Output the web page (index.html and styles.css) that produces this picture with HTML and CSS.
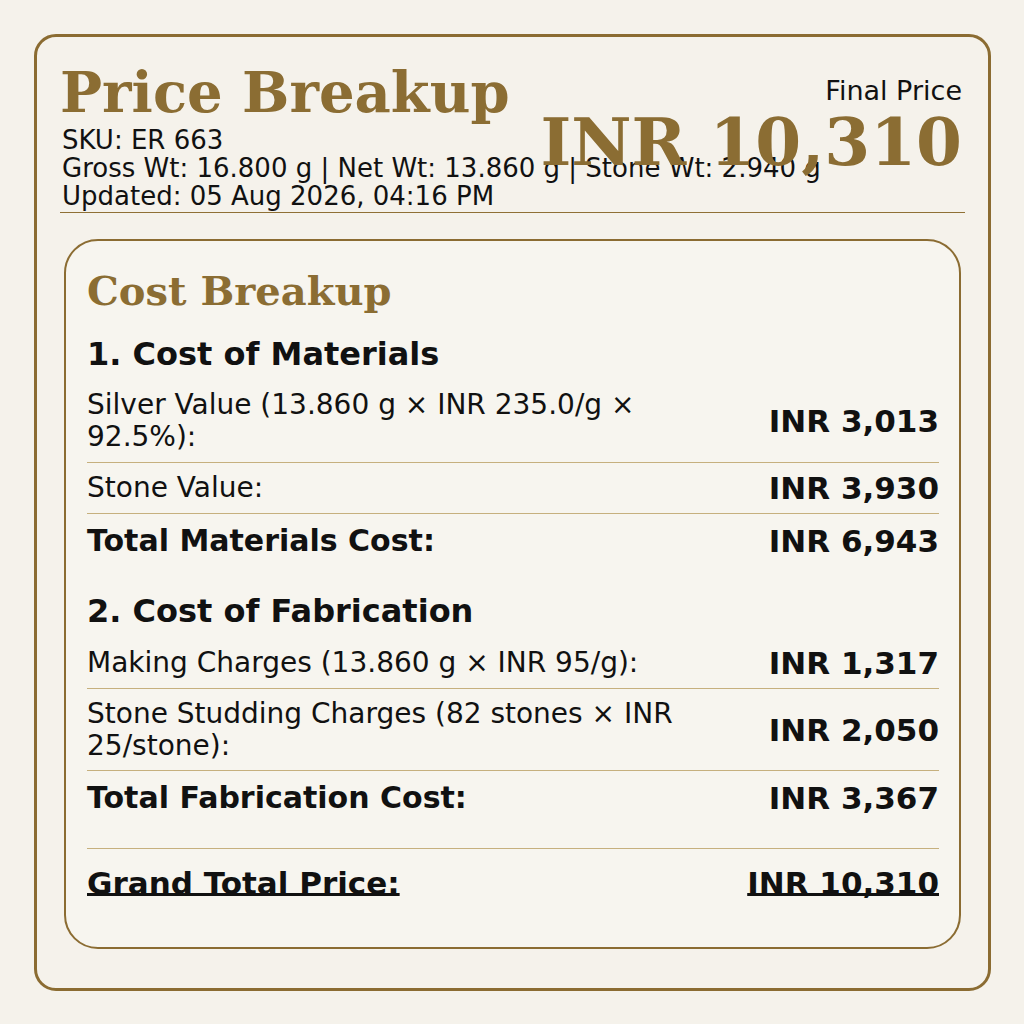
FILE: index.html
```html
<!DOCTYPE html>
<html>
<head>
<meta charset="utf-8">
<link rel="stylesheet" href="styles.css">
</head>
<body>
<div class="card">
  <header class="header">
    <div class="info">
      <h1 class="title">Price Breakup</h1>
      <div class="meta">SKU: ER 663</div>
      <div class="meta nowrap">Gross Wt: 16.800 g | Net Wt: 13.860 g | Stone Wt: 2.940 g</div>
      <div class="meta">Updated: 05 Aug 2026, 04:16 PM</div>
    </div>
    <div class="final">
      <div class="final-label">Final Price</div>
      <div class="final-value">INR 10,310</div>
    </div>
  </header>
  <section class="breakup">
    <h2 class="breakup-title">Cost Breakup</h2>
    <h3 class="section-title">1. Cost of Materials</h3>
    <div class="row"><div class="label">Silver Value (13.860 g × INR 235.0/g × 92.5%):</div><div class="value">INR 3,013</div></div>
    <div class="row"><div class="label">Stone Value:</div><div class="value">INR 3,930</div></div>
    <div class="row total"><div class="label">Total Materials Cost:</div><div class="value">INR 6,943</div></div>
    <h3 class="section-title second">2. Cost of Fabrication</h3>
    <div class="row"><div class="label">Making Charges (13.860 g × INR 95/g):</div><div class="value">INR 1,317</div></div>
    <div class="row"><div class="label">Stone Studding Charges (82 stones × INR 25/stone):</div><div class="value">INR 2,050</div></div>
    <div class="row total"><div class="label">Total Fabrication Cost:</div><div class="value">INR 3,367</div></div>
    <div class="grand">
      <div class="grand-label">Grand Total Price:</div>
      <div class="grand-value">INR 10,310</div>
    </div>
  </section>
</div>
</body>
</html>
```
FILE: styles.css
```css
* { box-sizing: border-box; }
html, body { margin: 0; padding: 0; }
body {
  background: #f5f2eb;
  padding: 34px 33px 34px 34px;
  font-family: "DejaVu Sans", sans-serif;
  color: #111111;
}
.card {
  height: 957px;
  border: 3px solid #8b6c32;
  border-radius: 22px;
  padding: 24px 23px 0 23px;
}
.header {
  position: relative;
  border-bottom: 1px solid #8f7035;
  padding-bottom: 1.8px;
}
.title {
  margin: 0 0 2px 0;
  font-family: "DejaVu Serif", serif;
  font-weight: bold;
  font-size: 56px;
  line-height: 63.2px;
  color: #8b6d33;
}
.meta {
  font-size: 26px;
  line-height: 28px;
  padding-left: 2px;
}
.nowrap { white-space: nowrap; }
.final {
  position: absolute;
  top: 15px;
  right: 3px;
  text-align: right;
}
.final-label {
  font-size: 27px;
  line-height: 29.7px;
}
.final-value {
  font-family: "DejaVu Serif", serif;
  font-weight: bold;
  font-size: 66px;
  line-height: 72.6px;
  color: #8b6d33;
  white-space: nowrap;
}
.breakup {
  margin: 26px 4px 0 4px;
  height: 710px;
  background: #f7f5ef;
  border: 2px solid #8b6c32;
  border-radius: 34px;
  padding: 26px 20px 0 21px;
}
.breakup-title {
  margin: 0;
  font-family: "DejaVu Serif", serif;
  font-weight: bold;
  font-size: 40px;
  line-height: 48px;
  color: #8b6d33;
}
.section-title {
  margin: 20px 0 7.5px 0;
  font-size: 32px;
  font-weight: bold;
  line-height: 38.4px;
}
.section-title.second { margin-top: 25px; }
.row {
  display: flex;
  justify-content: space-between;
  align-items: center;
  gap: 30px;
  padding: 8.35px 0;
  border-bottom: 1px solid #c6b07e;
}
.row.total {
  border-bottom: none;
  padding-top: 10px;
}
.label {
  font-size: 28px;
  line-height: 32px;
  max-width: 620px;
}
.row.total .label {
  font-weight: bold;
  font-size: 30px;
  line-height: 34px;
}
.value {
  font-size: 31px;
  font-weight: bold;
  line-height: 34px;
  white-space: nowrap;
}
.grand {
  margin-top: 25px;
  border-top: 1px solid #c6b07e;
  padding-top: 17px;
  display: flex;
  justify-content: space-between;
  font-size: 31px;
  font-weight: bold;
  line-height: 34px;
}
.grand-label, .grand-value {
  text-decoration: underline;
  text-decoration-thickness: 2.5px;
  text-underline-offset: -1px;
  text-decoration-skip-ink: none;
}
```
